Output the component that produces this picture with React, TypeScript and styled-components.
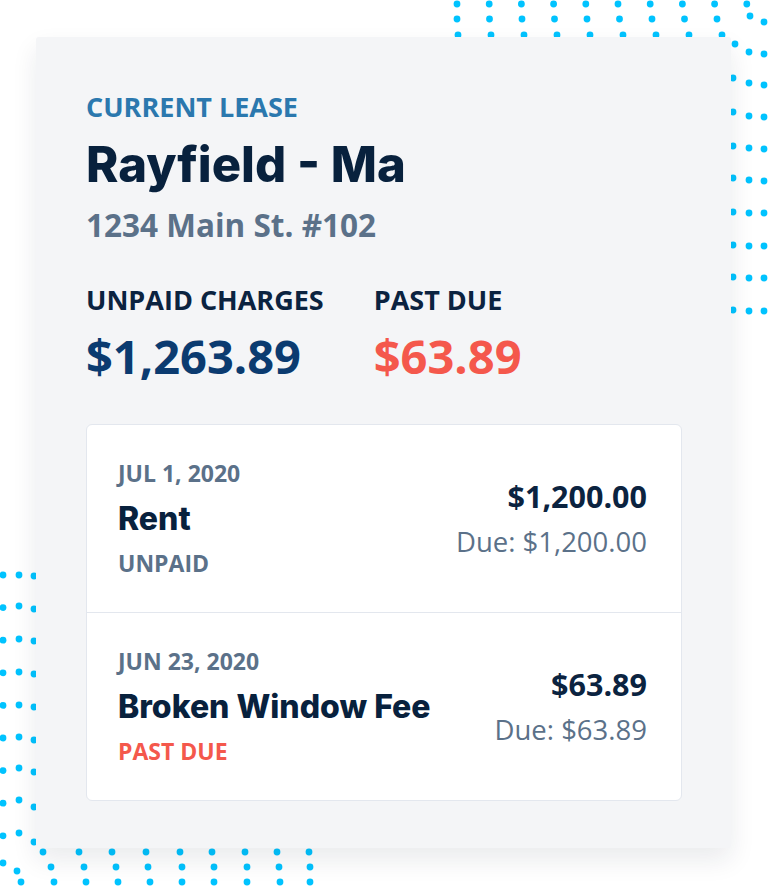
import styled, { createGlobalStyle } from 'styled-components';

const GlobalStyle = createGlobalStyle`
  body {
    margin: 0;
    background: #ffffff;
    font-family: "Open Sans", "Liberation Sans", sans-serif;
  }
`;

const charges = [
  { date: 'JUL 1, 2020', name: 'Rent', status: 'UNPAID', late: false, amount: '$1,200.00', due: 'Due: $1,200.00' },
  { date: 'JUN 23, 2020', name: 'Broken Window Fee', status: 'PAST DUE', late: true, amount: '$63.89', due: 'Due: $63.89' },
];

// dot bands behind the card, hand placed from the mockup
const range = (start: number, step: number, count: number) =>
  Array.from({ length: count }, (_, i) => start + step * i);

const dots: [number, number][] = [
  ...range(457, 32.2, 10).map((x) => [x, 4] as [number, number]),
  ...range(457, 32.5, 9).map((x) => [x, 19] as [number, number]),
  [750, 16],
  ...range(458, 33, 9).map((x) => [x, 35] as [number, number]),
  [735, 44],
  ...[22, 54, 85, 117, 149, 181, 213, 246, 278, 311].map((y) => [764, y] as [number, number]),
  ...[52, 83, 116, 148, 180, 213, 246, 278, 311].map((y) => [749, y] as [number, number]),
  ...[78, 112, 146, 178, 212, 245, 277, 310].map((y) => [733, y] as [number, number]),

  ...range(575, 32.6, 9).map((y) => [3, y] as [number, number]),
  [3, 863],
  ...[575, 606, 639, 672, 705, 737, 768, 800, 833].map((y) => [19, y] as [number, number]),
  [17, 871],
  ...[576, 609, 641, 674, 707, 740, 772, 807, 842].map((y) => [34, y] as [number, number]),
  ...[43, 79, 112, 146, 180, 212, 245, 277, 309].map((x) => [x, 852] as [number, number]),
  ...[51, 84, 116, 148, 182, 214, 247, 279, 310].map((x) => [x, 867] as [number, number]),
  ...[21, 54, 86, 118, 150, 182, 214, 247, 280, 310].map((x) => [x, 882] as [number, number]),
];

function Dots() {
  return (
    <DotLayer width="768" height="886" viewBox="0 0 768 886">
      {dots.map(([x, y], i) => (
        <circle key={i} cx={x} cy={y} r="3.4" fill="#00c3ff" />
      ))}
    </DotLayer>
  );
}

export default function App() {
  return (
    <>
      <GlobalStyle />
      <Page>
        <Dots />
        <Card>
          <Eyebrow>CURRENT LEASE</Eyebrow>
          <Title>Rayfield - Ma</Title>
          <Address>1234 Main St. #102</Address>

          <Summary>
            <Stat>
              <StatLabel>UNPAID CHARGES</StatLabel>
              <StatValue $tone="#0b3b70">$1,263.89</StatValue>
            </Stat>
            <Stat>
              <StatLabel>PAST DUE</StatLabel>
              <StatValue $tone="#f4584c">$63.89</StatValue>
            </Stat>
          </Summary>

          <ChargeList>
            {charges.map((c) => (
              <ChargeRow key={c.name}>
                <ChargeInfo>
                  <ChargeDate>{c.date}</ChargeDate>
                  <ChargeName>{c.name}</ChargeName>
                  <ChargeStatus $late={c.late}>{c.status}</ChargeStatus>
                </ChargeInfo>
                <ChargeAmounts>
                  <Amount>{c.amount}</Amount>
                  <DueAmount>{c.due}</DueAmount>
                </ChargeAmounts>
              </ChargeRow>
            ))}
          </ChargeList>
        </Card>
      </Page>
    </>
  );
}

const Page = styled.div`
  position: relative;
  width: 768px;
  height: 886px;
  overflow: hidden;
  padding: 37px 0 0 36px;
  box-sizing: border-box;
`;

const DotLayer = styled.svg`
  position: absolute;
  left: 0;
  top: 0;
`;

const Card = styled.div`
  position: relative;
  width: 695px;
  height: 811px;
  box-sizing: border-box;
  padding: 54px 49px 0 50px;
  background: #f4f5f7;
  border-radius: 3px;
  box-shadow: 0 12px 26px rgba(20, 35, 60, 0.09);
`;

const Eyebrow = styled.div`
  font-family: "Open Sans", sans-serif;
  font-weight: 700;
  font-size: 27px;
  line-height: 32px;
  color: #2b78ae;
`;

const Title = styled.h1`
  margin: 13px 0 0;
  font-family: Inter, "Open Sans", sans-serif;
  font-weight: 800;
  font-size: 49px;
  line-height: 58px;
  color: #08213d;
`;

const Address = styled.div`
  margin-top: 13px;
  font-family: "Open Sans", sans-serif;
  font-weight: 700;
  font-size: 31.5px;
  line-height: 36px;
  color: #5b7189;
`;

const Summary = styled.div`
  display: flex;
  gap: 50px;
  margin-top: 41px;
`;

const Stat = styled.div`
  display: flex;
  flex-direction: column;
`;

const StatLabel = styled.div`
  font-family: "Open Sans", sans-serif;
  font-weight: 700;
  font-size: 27px;
  line-height: 32px;
  color: #0b2340;
`;

const StatValue = styled.div<{ $tone: string }>`
  margin-top: 13px;
  font-family: "Open Sans", sans-serif;
  font-weight: 700;
  font-size: 47px;
  line-height: 54px;
  color: ${(p) => p.$tone};
`;

const ChargeList = styled.div`
  margin-top: 41px;
  background: #ffffff;
  border: 1px solid #e3e7ee;
  border-radius: 6px;
`;

const ChargeRow = styled.div`
  display: flex;
  justify-content: space-between;
  align-items: center;
  height: 187px;
  padding: 0 34px 0 31px;

  & + & {
    border-top: 1px solid #e3e7ee;
  }
`;

const ChargeInfo = styled.div`
  display: flex;
  flex-direction: column;
`;

const ChargeDate = styled.div`
  font-family: "Open Sans", sans-serif;
  font-weight: 700;
  font-size: 23px;
  line-height: 45px;
  color: #5b7189;
`;

const ChargeName = styled.div`
  font-family: Inter, "Open Sans", sans-serif;
  font-weight: 800;
  font-size: 32px;
  line-height: 45px;
  color: #08213d;
`;

const ChargeStatus = styled.div<{ $late: boolean }>`
  font-family: "Open Sans", sans-serif;
  font-weight: 700;
  font-size: 23px;
  line-height: 45px;
  color: ${(p) => (p.$late ? '#f4584c' : '#5b7189')};
`;

const ChargeAmounts = styled.div`
  display: flex;
  flex-direction: column;
  align-items: flex-end;
`;

const Amount = styled.div`
  font-family: "Open Sans", sans-serif;
  font-weight: 700;
  font-size: 30.5px;
  line-height: 45px;
  color: #0b2340;
`;

const DueAmount = styled.div`
  font-family: "Open Sans", sans-serif;
  font-weight: 400;
  font-size: 27.5px;
  line-height: 45px;
  color: #5b7189;
`;
